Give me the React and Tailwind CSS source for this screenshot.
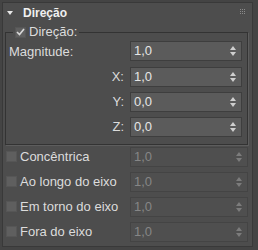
import React from 'react';

const font = { fontFamily: '"Liberation Sans", Arial, sans-serif' };

function Spinner({ value, disabled }) {
  return (
    <div
      className={`flex items-center justify-between h-[20px] pl-[3px] pr-[5px] border ${
        disabled
          ? 'bg-[#4f4f4f] border-[#444] text-[#868686]'
          : 'bg-[#5b5b5b] border-[#3e3e3e] text-[#e6e6e6]'
      }`}
    >
      <span className="text-[13px] leading-none">{value}</span>
      <svg width="6" height="10" viewBox="0 0 6 10">
        <path d="M3 0 L6 4 L0 4 Z" fill={disabled ? '#7c7c7c' : '#cfcfcf'} />
        <path d="M0 6 L6 6 L3 10 Z" fill={disabled ? '#7c7c7c' : '#cfcfcf'} />
      </svg>
    </div>
  );
}

function Box({ checked }) {
  return (
    <div className="w-[11px] h-[11px] bg-[#5f5f5f] border border-[#565656] flex items-center justify-center">
      {checked && (
        <svg width="9" height="8" viewBox="0 0 9 8">
          <path d="M1 4 L3.5 6.5 L8 1" stroke="#d8d8d8" strokeWidth="1.6" fill="none" />
        </svg>
      )}
    </div>
  );
}

export default function App() {
  const axes = [
    ['X:', '1,0'],
    ['Y:', '0,0'],
    ['Z:', '0,0'],
  ];
  const options = ['Concêntrica', 'Ao longo do eixo', 'Em torno do eixo', 'Fora do eixo'];

  return (
    <div className="w-[258px] h-[250px] bg-[#444444] pt-[2px] pl-[2px] text-[#dcdcdc]" style={font}>
      <div className="w-[251px] h-[245px] bg-[#4d4d4d] border border-[#393939] flex flex-col">
        {/* Header */}
        <div className="h-[22px] flex items-center pl-[4px] pr-[7px]">
          <svg width="6" height="5" viewBox="0 0 6 5" className="mt-[-2px]">
            <path d="M0 0 L6 0 L3 4 Z" fill="#e8e8e8" />
          </svg>
          <span className="ml-[10px] text-[12px] font-bold text-[#f0f0f0] mt-[-2px]">Direção</span>
          <div className="ml-auto grid grid-cols-3 gap-[1px] mt-[-6px]">
            {Array.from({ length: 9 }).map((_, i) => (
              <div key={i} className="w-[1px] h-[1px] bg-[#8a8a8a]" />
            ))}
          </div>
        </div>

        {/* Group */}
        <fieldset className="ml-[2px] mr-[4px] border border-[#333] shadow-[1px_1px_0_#5d5d5d] pl-[3px] pr-[5px] pb-[7px]">
          <legend className="ml-[4px] px-[2px] flex items-center gap-[3px] h-[14px] text-[13px]">
            <Box checked />
            <span>Direção:</span>
          </legend>
          <div className="flex items-center mt-[1px]">
            <span className="text-[13px] w-[121px] mt-[2px]">Magnitude:</span>
            <div className="flex-1">
              <Spinner value="1,0" />
            </div>
          </div>
          <div className="flex flex-col gap-[5px] mt-[5px]">
            {axes.map(([label, val]) => (
              <div key={label} className="flex items-center">
                <span className="text-[13px] w-[116px] text-right pr-[1px]">{label}</span>
                <div className="flex-1 ml-[5px]">
                  <Spinner value={val} />
                </div>
              </div>
            ))}
          </div>
        </fieldset>

        {/* Options */}
        <div className="flex flex-col gap-[5px] mt-[2px] pl-[3px] pr-[4px]">
          {options.map((o) => (
            <div key={o} className="flex items-center">
              <Box />
              <span className="ml-[3px] text-[13px] w-[110px]">{o}</span>
              <div className="flex-1">
                <Spinner value="1,0" disabled />
              </div>
            </div>
          ))}
        </div>
      </div>
    </div>
  );
}
